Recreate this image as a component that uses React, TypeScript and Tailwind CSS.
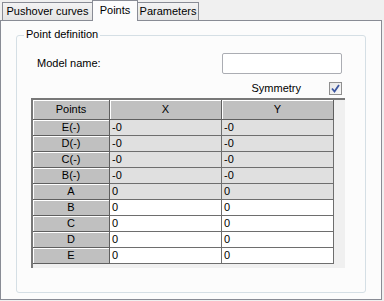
import React from "react";

const rows = [
  { name: "E(-)", x: "-0", y: "-0", shaded: true },
  { name: "D(-)", x: "-0", y: "-0", shaded: true },
  { name: "C(-)", x: "-0", y: "-0", shaded: true },
  { name: "B(-)", x: "-0", y: "-0", shaded: true },
  { name: "A", x: "0", y: "0", shaded: true },
  { name: "B", x: "0", y: "0", shaded: false },
  { name: "C", x: "0", y: "0", shaded: false },
  { name: "D", x: "0", y: "0", shaded: false },
  { name: "E", x: "0", y: "0", shaded: false },
];

const FixedCell: React.FC<{ children: React.ReactNode; tall?: boolean }> = ({ children, tall }) => (
  <div
    className={`${tall ? "h-[20px]" : "h-[16px]"} flex items-center justify-center bg-[#c0c0c0] border-r border-b border-[#5f5f5f] shadow-[inset_1px_1px_0_#ffffff] leading-none`}
  >
    {children}
  </div>
);

const DataCell: React.FC<{ children: React.ReactNode; shaded: boolean }> = ({ children, shaded }) => (
  <div
    className={`h-[16px] flex items-center pl-[2px] border-r border-b border-[#6e6e6e] leading-none ${
      shaded ? "bg-[#e0e0e0]" : "bg-white"
    }`}
  >
    {children}
  </div>
);

export default function App() {
  return (
    <div className="w-[384px] h-[301px] bg-[#f0f0f0] font-['Liberation_Sans',Arial,sans-serif] text-[11px] text-black">
      {/* tabs */}
      <div className="flex items-end h-[20px] pl-[2px]">
        <div className="w-[90px] h-[18px] flex items-center justify-center border border-r-0 border-b-0 border-[#898c95] bg-gradient-to-b from-[#f3f3f3] to-[#e4e4e4] leading-none">
          Pushover curves
        </div>
        <div className="relative z-10 w-[46px] h-[21px] -mb-px flex items-start justify-center pt-[4px] border border-b-0 border-[#898c95] bg-[#fcfcfc] leading-none">
          Points
        </div>
        <div className="w-[61px] h-[18px] flex items-center justify-center border border-l-0 border-b-0 border-[#898c95] bg-gradient-to-b from-[#f3f3f3] to-[#e4e4e4] leading-none">
          Parameters
        </div>
      </div>

      {/* page */}
      <div className="w-[382px] h-[280px] border border-[#898c95] bg-[#fcfcfc] pl-[15px] pt-[14px]">
        <div className="relative w-[350px] h-[258px] border border-[#d5dfe5] rounded-[3px] pt-[17px]">
          <span className="absolute -top-[7px] left-[7px] px-[2px] bg-[#fcfcfc] leading-none">Point definition</span>

          <div className="flex items-center pl-[20px] pr-[23px]">
            <span>Model name:</span>
            <div className="ml-auto w-[120px] h-[21px] border border-[#abadb3] rounded-[2px] bg-white" />
          </div>

          <div className="flex items-center justify-end pr-[23px] mt-[8px] h-[13px]">
            <span className="mr-[28px]">Symmetry</span>
            <div className="w-[13px] h-[13px] border border-[#8f8f8f] bg-gradient-to-br from-[#e6e6e6] to-[#f8f8f8] flex items-center justify-center">
              <svg width="9" height="9" viewBox="0 0 9 9">
                <path d="M1 4.5 L3.5 7.5 L8 1" fill="none" stroke="#3c56a0" strokeWidth="1.8" />
              </svg>
            </div>
          </div>

          <div className="ml-[14px] mt-[3px] w-[314px] h-[170px] border-l-2 border-t-2 border-[#787878] bg-[#f0f0f0]">
            <div className="grid grid-cols-[77px_112px_112px]">
              <FixedCell tall>Points</FixedCell>
              <FixedCell tall>X</FixedCell>
              <FixedCell tall>Y</FixedCell>
              {rows.map((r) => (
                <React.Fragment key={r.name + r.x}>
                  <FixedCell>{r.name}</FixedCell>
                  <DataCell shaded={r.shaded}>{r.x}</DataCell>
                  <DataCell shaded={r.shaded}>{r.y}</DataCell>
                </React.Fragment>
              ))}
            </div>
          </div>
        </div>
      </div>
    </div>
  );
}
